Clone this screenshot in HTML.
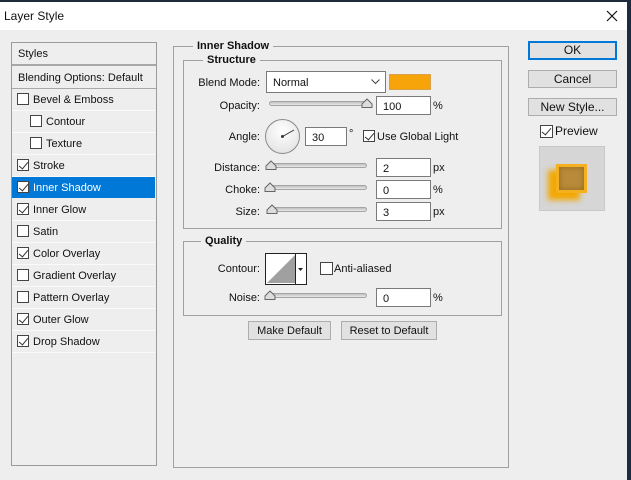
<!DOCTYPE html>
<html><head><meta charset="utf-8"><style>
*{margin:0;padding:0;box-sizing:border-box}
body{width:631px;height:480px;overflow:hidden;background:#eeeeee;font-family:"Liberation Sans",sans-serif;font-size:11px;color:#111;position:relative}
.a{position:absolute}
.t{position:absolute;white-space:nowrap;line-height:13px;padding-top:1px}
.cb{position:absolute;width:12px;height:12px;border:1px solid #444;background:#fff}
.cb.c::after{content:"";position:absolute;left:3px;top:0px;width:4px;height:8px;border:solid #333;border-width:0 1.5px 1.5px 0;transform:rotate(40deg)}
.row{position:absolute;left:12px;width:143px;height:22px;border-bottom:1px solid #fafafa}
.inp{position:absolute;background:#fff;border:1px solid #7a7a7a;height:19px;padding:4px 0 0 6px;line-height:13px}
.trk{position:absolute;height:5px;width:98px;border:1px solid #a5a5a5;border-radius:3px;background:linear-gradient(#c0c0c0,#e8e8e8)}
.th{position:absolute;width:0;height:0}
.th svg{position:absolute;left:-6px;top:0}
.btn{position:absolute;border:1px solid #adadad;background:#e1e1e1;text-align:center;line-height:16px;font-size:12px}
.grp{position:absolute;border:1px solid #a0a0a0}
.leg{position:absolute;background:#eeeeee;font-weight:bold;padding:0 4px;line-height:12px}
.r{text-align:right;width:80px}
</style></head><body>
<div class="a" style="left:0;top:0;width:631px;height:2px;background:#1d2a3a"></div>
<div class="a" style="left:0;top:2px;width:627px;height:28px;background:#fff"></div>
<div class="a" style="left:627px;top:0;width:4px;height:480px;background:#1b2c40"></div>
<div class="t" style="left:4px;top:9px;font-size:12px">Layer Style</div>
<svg class="a" style="left:606px;top:10px" width="12" height="12"><path d="M1 1L11 11M11 1L1 11" stroke="#111" stroke-width="1.2"/></svg>

<div class="a" style="left:11px;top:42px;width:146px;height:424px;border:1px solid #9a9a9a"></div>
<div class="a" style="left:12px;top:64px;width:144px;height:2px;border-top:1px solid #a8a8a8;border-bottom:1px solid #a8a8a8"></div>
<div class="a" style="left:12px;top:88px;width:144px;height:1px;background:#a8a8a8"></div>
<div class="t" style="left:18px;top:47px">Styles</div>
<div class="t" style="left:18px;top:71px">Blending Options: Default</div>
<div class="row" style="top:89px"></div><div class="cb" style="left:17px;top:93px"></div><div class="t" style="left:33px;top:93px">Bevel &amp; Emboss</div>
<div class="row" style="top:111px"></div><div class="cb" style="left:30px;top:115px"></div><div class="t" style="left:46px;top:115px">Contour</div>
<div class="row" style="top:133px"></div><div class="cb" style="left:30px;top:137px"></div><div class="t" style="left:46px;top:137px">Texture</div>
<div class="row" style="top:155px"></div><div class="cb c" style="left:17px;top:159px"></div><div class="t" style="left:33px;top:159px">Stroke</div>
<div class="a" style="left:12px;top:177px;width:143px;height:21px;background:#0078d7"></div><div class="cb c" style="left:17px;top:181px"></div><div class="t" style="left:33px;top:181px;color:#fff">Inner Shadow</div>
<div class="row" style="top:199px"></div><div class="cb c" style="left:17px;top:203px"></div><div class="t" style="left:33px;top:203px">Inner Glow</div>
<div class="row" style="top:221px"></div><div class="cb" style="left:17px;top:225px"></div><div class="t" style="left:33px;top:225px">Satin</div>
<div class="row" style="top:243px"></div><div class="cb c" style="left:17px;top:247px"></div><div class="t" style="left:33px;top:247px">Color Overlay</div>
<div class="row" style="top:265px"></div><div class="cb" style="left:17px;top:269px"></div><div class="t" style="left:33px;top:269px">Gradient Overlay</div>
<div class="row" style="top:287px"></div><div class="cb" style="left:17px;top:291px"></div><div class="t" style="left:33px;top:291px">Pattern Overlay</div>
<div class="row" style="top:309px"></div><div class="cb c" style="left:17px;top:313px"></div><div class="t" style="left:33px;top:313px">Outer Glow</div>
<div class="row" style="top:331px"></div><div class="cb c" style="left:17px;top:335px"></div><div class="t" style="left:33px;top:335px">Drop Shadow</div>

<div class="grp" style="left:173px;top:46px;width:336px;height:422px"></div>
<div class="leg" style="left:193px;top:40px">Inner Shadow</div>
<div class="grp" style="left:183px;top:60px;width:319px;height:169px"></div>
<div class="leg" style="left:203px;top:54px">Structure</div>

<div class="t r" style="left:180px;top:76px">Blend Mode:</div>
<div class="inp" style="left:266px;top:71px;width:120px;height:22px;padding-top:5px">Normal</div>
<svg class="a" style="left:371px;top:79px" width="9" height="6"><path d="M0.5 0.5L4.5 4.5L8.5 0.5" stroke="#444" fill="none"/></svg>
<div class="a" style="left:389px;top:74px;width:42px;height:16px;background:#f7a30a;border:1px solid #d8a24a"></div>

<div class="t r" style="left:180px;top:99px">Opacity:</div>
<div class="trk" style="left:269px;top:101px"></div>
<div class="th" style="left:367px;top:98px"><svg width="12" height="10"><path d="M1 9.5V6L6 1L11 6V9.5Z" fill="#ddd" stroke="#666"/></svg></div>
<div class="inp" style="left:376px;top:96px;width:55px">100</div><div class="t" style="left:433px;top:99px">%</div>

<div class="t r" style="left:180px;top:130px">Angle:</div>
<div class="a" style="left:265px;top:119px;width:35px;height:35px;border-radius:50%;border:1px solid #8a8a8a;background:radial-gradient(circle at 50% 35%,#fff,#ddd)"></div>
<svg class="a" style="left:265px;top:119px" width="35" height="35"><line x1="17.5" y1="17.5" x2="29" y2="11" stroke="#333"/><circle cx="17.5" cy="17.5" r="1.5" fill="#333"/></svg>
<div class="inp" style="left:305px;top:127px;width:42px">30</div><div class="t" style="left:349px;top:127px">°</div>
<div class="cb c" style="left:363px;top:130px"></div><div class="t" style="left:377px;top:130px">Use Global Light</div>

<div class="t r" style="left:180px;top:161px">Distance:</div>
<div class="trk" style="left:269px;top:163px"></div>
<div class="th" style="left:271px;top:160px"><svg width="12" height="10"><path d="M1 9.5V6L6 1L11 6V9.5Z" fill="#ddd" stroke="#666"/></svg></div>
<div class="inp" style="left:376px;top:158px;width:55px">2</div><div class="t" style="left:433px;top:161px">px</div>

<div class="t r" style="left:180px;top:183px">Choke:</div>
<div class="trk" style="left:269px;top:185px"></div>
<div class="th" style="left:270px;top:182px"><svg width="12" height="10"><path d="M1 9.5V6L6 1L11 6V9.5Z" fill="#ddd" stroke="#666"/></svg></div>
<div class="inp" style="left:376px;top:180px;width:55px">0</div><div class="t" style="left:433px;top:183px">%</div>

<div class="t r" style="left:180px;top:205px">Size:</div>
<div class="trk" style="left:269px;top:207px"></div>
<div class="th" style="left:272px;top:204px"><svg width="12" height="10"><path d="M1 9.5V6L6 1L11 6V9.5Z" fill="#ddd" stroke="#666"/></svg></div>
<div class="inp" style="left:376px;top:202px;width:55px">3</div><div class="t" style="left:433px;top:205px">px</div>

<div class="grp" style="left:183px;top:241px;width:319px;height:75px"></div>
<div class="leg" style="left:201px;top:235px">Quality</div>
<div class="t r" style="left:180px;top:262px">Contour:</div>
<div class="a" style="left:265px;top:253px;width:42px;height:32px;border:1px solid #222;background:#fff"></div>
<svg class="a" style="left:266px;top:254px" width="40" height="30"><path d="M1 29L29 1V29Z" fill="#a0a0a0"/><line x1="29.5" y1="0" x2="29.5" y2="30" stroke="#222"/><path d="M32 14h5l-2.5 3z" fill="#222"/></svg>
<div class="cb" style="left:320px;top:262px;width:13px;height:13px"></div><div class="t" style="left:334px;top:262px">Anti-aliased</div>
<div class="t r" style="left:180px;top:291px">Noise:</div>
<div class="trk" style="left:269px;top:293px"></div>
<div class="th" style="left:270px;top:290px"><svg width="12" height="10"><path d="M1 9.5V6L6 1L11 6V9.5Z" fill="#ddd" stroke="#666"/></svg></div>
<div class="inp" style="left:376px;top:288px;width:55px">0</div><div class="t" style="left:433px;top:291px">%</div>

<div class="btn" style="left:248px;top:321px;width:83px;height:19px;font-size:11px;line-height:18px">Make Default</div>
<div class="btn" style="left:341px;top:321px;width:96px;height:19px;font-size:11px;line-height:18px">Reset to Default</div>

<div class="btn" style="left:528px;top:41px;width:89px;height:19px;border:2px solid #0078d7;line-height:15px">OK</div>
<div class="btn" style="left:528px;top:70px;width:89px;height:18px">Cancel</div>
<div class="btn" style="left:528px;top:98px;width:89px;height:18px">New Style...</div>
<div class="cb c" style="left:540px;top:125px;width:13px;height:13px"></div><div class="t" style="left:555px;top:124px;font-size:12px">Preview</div>
<div class="a" style="left:539px;top:146px;width:66px;height:65px;background:#d6d6d6;border:1px solid #c8c8c8"></div>
<div class="a" style="left:548px;top:170px;width:32px;height:30px;background:#f2a600;filter:blur(3px)"></div>
<div class="a" style="left:556px;top:164px;width:31px;height:29px;background:#b88a3a;border:3px solid #f5b020;box-shadow:inset 0 0 6px #946818"></div>
</body></html>
